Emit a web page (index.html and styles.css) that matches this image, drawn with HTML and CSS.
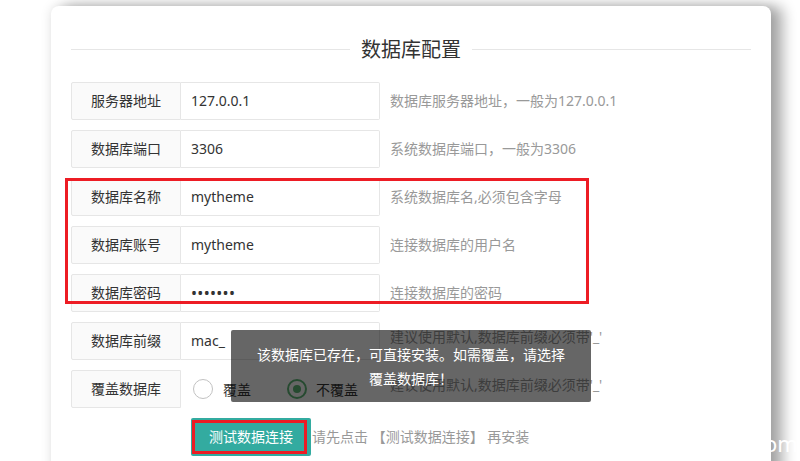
FILE: index.html
```html
<!DOCTYPE html>
<html lang="zh-CN">
<head>
<meta charset="utf-8">
<title>数据库配置</title>
<link rel="stylesheet" href="styles.css">
</head>
<body>
<div class="page">
  <div class="card">
    <div class="title">
      <span class="rule"></span>
      <h2>数据库配置</h2>
      <span class="rule"></span>
    </div>
    <div class="form">
      <div class="row">
        <div class="label">服务器地址</div>
        <div class="field">127.0.0.1</div>
        <div class="hint">数据库服务器地址，一般为127.0.0.1</div>
      </div>
      <div class="row">
        <div class="label">数据库端口</div>
        <div class="field">3306</div>
        <div class="hint">系统数据库端口，一般为3306</div>
      </div>
      <div class="row">
        <div class="label">数据库名称</div>
        <div class="field">mytheme</div>
        <div class="hint">系统数据库名,必须包含字母</div>
      </div>
      <div class="row">
        <div class="label">数据库账号</div>
        <div class="field">mytheme</div>
        <div class="hint">连接数据库的用户名</div>
      </div>
      <div class="row">
        <div class="label">数据库密码</div>
        <div class="field field-pass">•••••••</div>
        <div class="hint">连接数据库的密码</div>
      </div>
      <div class="row">
        <div class="label">数据库前缀</div>
        <div class="field">mac_</div>
        <div class="hint hint-high">建议使用默认,数据库前缀必须带'_'</div>
      </div>
      <div class="row">
        <div class="label">覆盖数据库</div>
        <div class="radios">
          <div class="radio"><span class="ring"></span><span>覆盖</span></div>
          <div class="radio radio-on"><span class="ring"><span class="dot"></span></span><span>不覆盖</span></div>
        </div>
        <div class="hint hint-high">建议使用默认,数据库前缀必须带'_'</div>
      </div>
      <div class="actions">
        <div class="btn">测试数据连接</div>
        <div class="note">请先点击 【测试数据连接】 再安装</div>
      </div>
    </div>
  </div>

  <div class="mark mark-group"></div>
  <div class="mark mark-btn"></div>

  <div class="tip">该数据库已存在，可直接安装。如需覆盖，请选择<br>覆盖数据库！</div>

  <div class="wm">om</div>
</div>
</body>
</html>
```

FILE: styles.css
```css
* { box-sizing: border-box; }

html, body {
  margin: 0;
  padding: 0;
  background: #ffffff;
}

body {
  font-family: "Noto Sans", "Noto Sans CJK SC", sans-serif;
  font-size: 14px;
  color: #333;
}

.page {
  position: relative;
  width: 800px;
  height: 461px;
  overflow: hidden;
  padding: 6px 0 0 51px;
}

.card {
  width: 720px;
  height: 500px;
  background: #fff;
  border-radius: 8px;
  box-shadow: 0 0 12px rgba(0, 0, 0, 0.12), 12px 0 14px rgba(0, 0, 0, 0.32);
  padding: 30px 20px 0 20px;
}

.title {
  display: flex;
  align-items: center;
  gap: 11px;
}

.rule {
  flex: 1;
  height: 1px;
  background: #e6e6e6;
}

.title h2 {
  margin: 0;
  font-size: 20px;
  font-weight: 400;
  line-height: 26px;
  color: #333;
  font-family: "Noto Sans CJK SC", sans-serif;
}

.form {
  margin-top: 20px;
}

.row {
  display: flex;
  height: 38px;
  margin-bottom: 10px;
}

.label {
  width: 110px;
  height: 38px;
  border: 1px solid #e6e6e6;
  border-radius: 2px 0 0 2px;
  background: #fafafa;
  text-align: center;
  line-height: 36px;
  color: #333;
}

.field {
  width: 199px;
  height: 38px;
  border: 1px solid #e6e6e6;
  border-left: 0;
  border-radius: 0 2px 2px 0;
  padding-left: 10px;
  line-height: 36px;
  color: #333;
}

.field-pass {
  font-size: 16px;
  letter-spacing: 0.3px;
}

.hint {
  margin-left: 10px;
  line-height: 38px;
  color: #999;
  white-space: nowrap;
}

.hint-high {
  align-self: flex-start;
  line-height: 30px;
}

.radios {
  width: 199px;
  display: flex;
  align-items: center;
  padding-left: 12px;
}

.radio {
  display: flex;
  align-items: center;
  color: #333;
}

.radio + .radio {
  margin-left: 36px;
}

.ring {
  width: 20px;
  height: 20px;
  border: 1.5px solid #c2c2c2;
  border-radius: 50%;
  margin-right: 10px;
  display: flex;
  align-items: center;
  justify-content: center;
}

.radio-on .ring {
  border: 2px solid #5fb878;
  margin-right: 9px;
}

.dot {
  width: 8px;
  height: 8px;
  border-radius: 50%;
  background: #5fb878;
}

.actions {
  display: flex;
  align-items: center;
  margin-left: 120px;
}

.btn {
  width: 120px;
  height: 38px;
  line-height: 38px;
  text-align: center;
  color: #fff;
  background: #33aba0;
  border-radius: 2px;
}

.note {
  margin-left: 1px;
  color: #999;
  line-height: 38px;
}

.mark {
  position: absolute;
  border: 3px solid #ed1c24;
}

.mark-group {
  left: 65px;
  top: 178px;
  width: 524px;
  height: 126px;
}

.mark-btn {
  left: 192px;
  top: 420px;
  width: 115px;
  height: 34px;
}

.tip {
  position: absolute;
  left: 231px;
  top: 330px;
  width: 360px;
  padding: 12px 25px;
  background: rgba(0, 0, 0, 0.6);
  color: #fff;
  border-radius: 2px;
  text-align: center;
  line-height: 24px;
  font-family: "Noto Sans CJK SC", sans-serif;
}

.wm {
  position: absolute;
  left: 764px;
  top: 428px;
  color: #fff;
  font-size: 22px;
  line-height: 30px;
  font-family: "Noto Sans", sans-serif;
}
```
